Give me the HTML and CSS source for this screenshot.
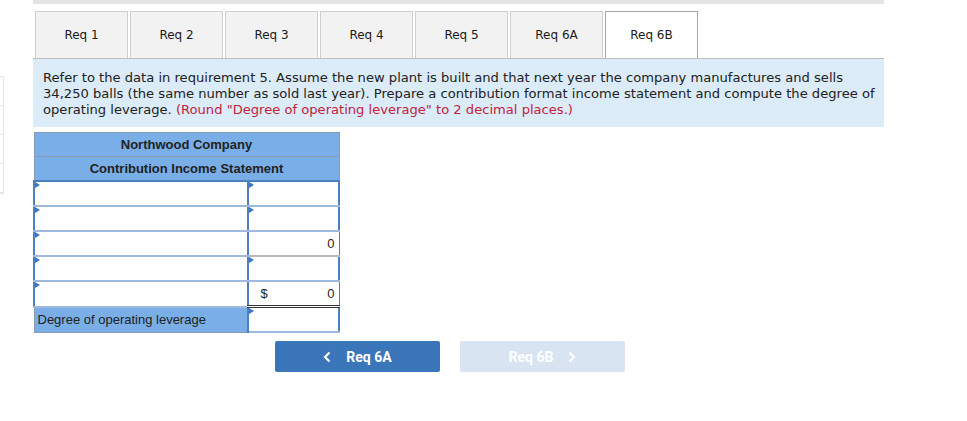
FILE: index.html
```html
<!DOCTYPE html>
<html>
<head>
<meta charset="utf-8">
<link rel="stylesheet" href="styles.css">
</head>
<body>
<div class="page">
  <div class="side-strip"><div></div><div></div><div></div><div></div></div>
  <div class="main">
    <div class="topbar"></div>
    <div class="tabs">
      <div class="tab">Req 1</div>
      <div class="tab">Req 2</div>
      <div class="tab">Req 3</div>
      <div class="tab">Req 4</div>
      <div class="tab">Req 5</div>
      <div class="tab">Req 6A</div>
      <div class="tab active">Req 6B</div>
    </div>
    <div class="instructions">Refer to the data in requirement 5. Assume the new plant is built and that next year the company manufactures and sells 34,250 balls (the same number as sold last year). Prepare a contribution format income statement and compute the degree of operating leverage. <span class="red">(Round "Degree of operating leverage" to 2 decimal places.)</span></div>
    <table class="stmt">
      <tr><th colspan="2">Northwood Company</th></tr>
      <tr><th colspan="2">Contribution Income Statement</th></tr>
      <tr><td class="inp dd"></td><td class="inp dd"></td></tr>
      <tr><td class="inp dd"></td><td class="inp dd"></td></tr>
      <tr><td class="inp dd"></td><td class="calc">0</td></tr>
      <tr><td class="inp dd"></td><td class="inp dd"></td></tr>
      <tr><td class="inp dd"></td><td class="calc total"><span class="cur">$</span><span>0</span></td></tr>
      <tr><td class="label">Degree of operating leverage</td><td class="inp dd"></td></tr>
    </table>
    <div class="nav">
      <div class="btn prev"><svg width="8" height="12" viewBox="0 0 8 12"><path d="M6.5 1.5 L2 6 L6.5 10.5" fill="none" stroke="#fff" stroke-width="2.2"/></svg><span>Req 6A</span></div>
      <div class="btn next disabled"><span>Req 6B</span><svg width="8" height="12" viewBox="0 0 8 12"><path d="M1.5 1.5 L6 6 L1.5 10.5" fill="none" stroke="#fff" stroke-width="2.2"/></svg></div>
    </div>
  </div>
</div>
</body>
</html>
```
FILE: styles.css
```css
html, body {
  margin: 0;
  padding: 0;
  background: #fff;
}
.page {
  display: flex;
  align-items: flex-start;
}
.side-strip {
  width: 3px;
  margin-top: 76px;
  border: 1px solid #e6e6e6;
  border-left: none;
  display: flex;
  flex-direction: column;
}
.side-strip div {
  height: 28px;
  border-bottom: 1px solid #e6e6e6;
}
.main {
  margin-left: 29px;
  width: 851px;
}
.topbar {
  height: 4px;
  background: #e4e4e4;
}
.tabs {
  display: flex;
  gap: 2px;
  padding-left: 2px;
  margin-top: 7px;
  border-bottom: 1px solid #bfbfbf;
}
.tab {
  width: 91px;
  height: 46px;
  background: #f2f2f2;
  border: 1px solid #cfcfcf;
  border-bottom: none;
  display: flex;
  align-items: center;
  justify-content: center;
  font-family: "DejaVu Sans", Verdana, sans-serif;
  font-size: 12px;
  color: #1a1a1a;
}
.tab.active {
  background: #fff;
  border-color: #a6a6a6;
}
.instructions {
  background: #dbebf8;
  padding: 11px 7px 9px 10px;
  font-family: "DejaVu Sans", Verdana, sans-serif;
  font-size: 13.1px;
  line-height: 16px;
  color: #222;
}
.red {
  color: #c4213c;
}
.stmt {
  margin-top: 5px;
  border-collapse: collapse;
  width: 307px;
  font-family: "Liberation Sans", Arial, sans-serif;
}
.stmt th {
  background: #79aee6;
  height: 23px;
  padding: 0;
  font-size: 13px;
  font-weight: bold;
  color: #222;
  border: 1px solid #8a9bb3;
  text-align: center;
}
.stmt td {
  height: 23px;
  padding: 0;
  font-size: 13px;
}
.stmt td:first-child {
  width: 209px;
}
.stmt td.inp {
  background: #fff;
  border: 2px solid #4d80c0;
  border-bottom-color: #9fb9dc;
  position: relative;
}
.stmt td.dd::before {
  content: "";
  position: absolute;
  left: 0;
  top: 0;
  border-left: 5px solid #3b78c2;
  border-top: 3px solid transparent;
  border-bottom: 3px solid transparent;
}
.stmt td.calc {
  background: #fff;
  border-top: 1px solid #333;
  border-left: 2px solid #4d80c0;
  border-right: 1px solid #4d80c0;
  border-bottom: 2px solid #b8b8b8;
  text-align: right;
  padding-right: 4px;
  color: #222;
}
.stmt td.total {
  border-bottom: 3px double #333;
}
.cur {
  float: left;
  padding-left: 12px;
}
.stmt td.label {
  background: #79aee6;
  border: 1px solid #8a9bb3;
  border-right: 2px solid #4d80c0;
  font-size: 13px;
  color: #222;
  padding-left: 3px;
  height: 23px;
}
.nav {
  display: flex;
  gap: 20px;
  margin-top: 8px;
  margin-left: 242px;
}
.btn {
  width: 165px;
  height: 31px;
  border-radius: 2px;
  background: #3b76bb;
  color: #fff;
  display: flex;
  align-items: center;
  justify-content: center;
  gap: 15px;
  font-family: Roboto, "Liberation Sans", sans-serif;
  font-weight: bold;
  font-size: 14px;
}
.btn.disabled {
  background: #d8e4f1;
}
```
